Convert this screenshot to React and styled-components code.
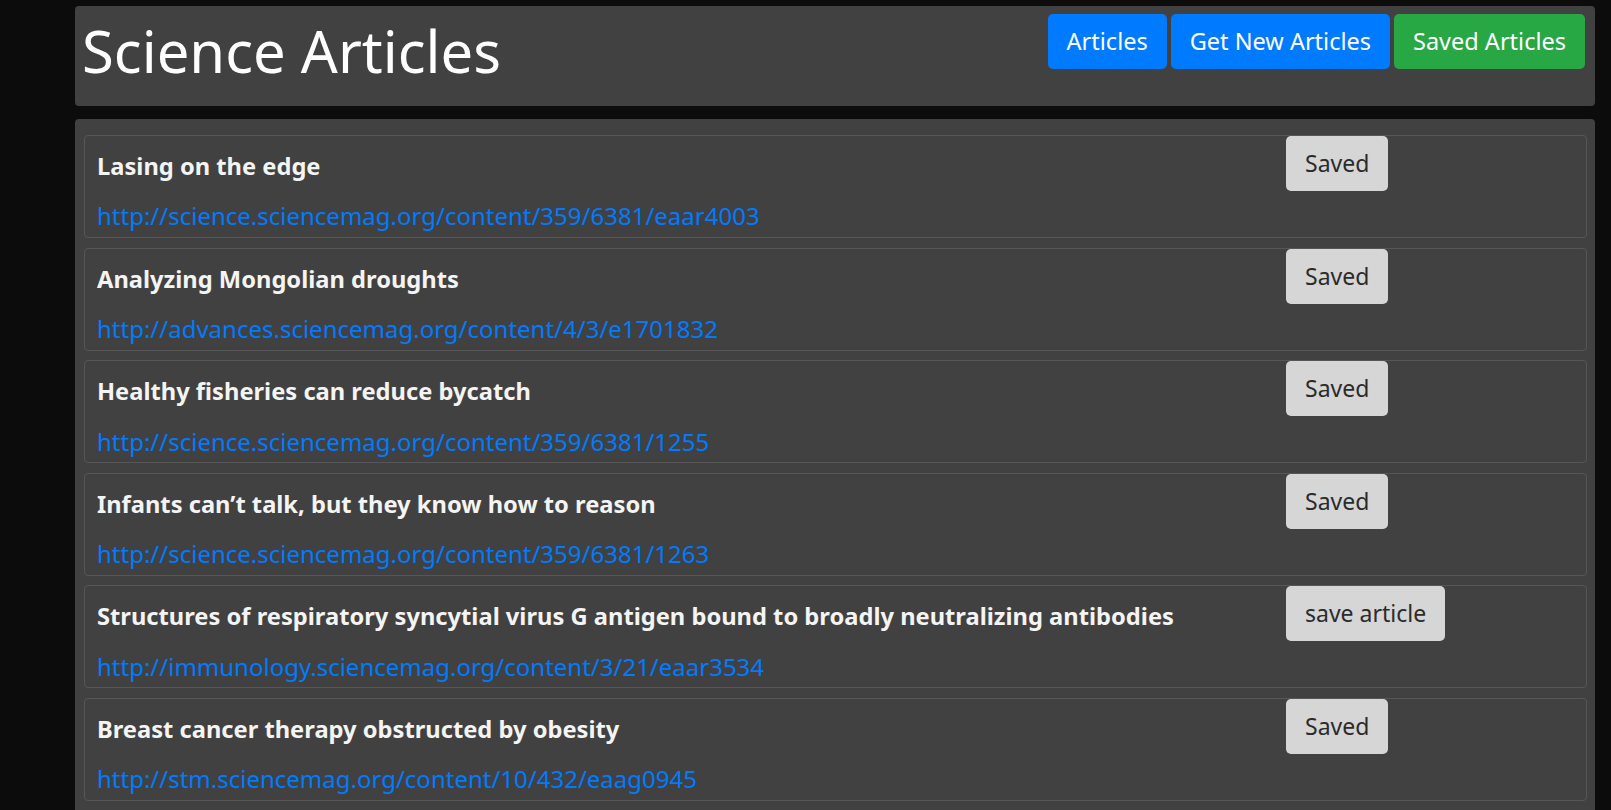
import React from 'react'
import styled, { createGlobalStyle } from 'styled-components'

const GlobalStyle = createGlobalStyle`
  html, body {
    margin: 0;
    padding: 0;
    background: #0c0c0c;
    font-family: "Noto Sans", "DejaVu Sans", sans-serif;
  }
  * {
    box-sizing: border-box;
  }
`;

const Page = styled.div`
  padding: 6px 16px 0 75px;
  min-height: 810px;
  overflow: hidden;
`;

const Header = styled.header`
  background: #414141;
  border-radius: 4px;
  height: 100px;
  display: flex;
  justify-content: space-between;
  align-items: flex-start;
  padding: 8px 10px 0 7px;
`;

const Title = styled.h1`
  margin: 2px 0 0 0;
  font-size: 58px;
  font-weight: 400;
  line-height: 1.2;
  color: #ffffff;
`;

const Nav = styled.nav`
  display: flex;
  gap: 4px;
`;

const Button = styled.button`
  height: 55px;
  padding: 0 19px;
  border: none;
  border-radius: 5px;
  font-family: inherit;
  font-size: ${({ variant }) => (variant === 'light' ? '23px' : '23.5px')};
  line-height: 1;
  cursor: pointer;
  color: ${({ variant }) => (variant === 'light' ? '#2b2b2b' : '#ffffff')};
  background: ${({ variant }) =>
    variant === 'green' ? '#28a745' : variant === 'light' ? '#d6d6d6' : '#007bff'};
`;

const Main = styled.main`
  margin-top: 13px;
  background: #414141;
  border-radius: 4px 4px 0 0;
  padding: 16px 8px 20px 9px;
  display: flex;
  flex-direction: column;
  gap: 9.6px;
`;

const Card = styled.article`
  border: 1px solid #565656;
  border-radius: 4px;
  height: 103px;
  display: grid;
  grid-template-columns: 1fr 300px;
`;

const Body = styled.div`
  padding: 16px 12px 0 12px;
  display: flex;
  flex-direction: column;
  gap: 18px;
`;

const ArticleTitle = styled.h4`
  margin: 0;
  font-size: 23.7px;
  font-weight: 700;
  line-height: 1.2;
  color: #f4f4f4;
`;

const ArticleLink = styled.a`
  font-size: 24px;
  line-height: 36px;
  color: #007bff;
  text-decoration: none;
`;

const Side = styled.div`
  display: flex;
  align-items: flex-start;
`;

const articles = [
  { title: 'Lasing on the edge', url: 'http://science.sciencemag.org/content/359/6381/eaar4003', saved: true },
  { title: 'Analyzing Mongolian droughts', url: 'http://advances.sciencemag.org/content/4/3/e1701832', saved: true },
  { title: 'Healthy fisheries can reduce bycatch', url: 'http://science.sciencemag.org/content/359/6381/1255', saved: true },
  { title: 'Infants can\u2019t talk, but they know how to reason', url: 'http://science.sciencemag.org/content/359/6381/1263', saved: true },
  { title: 'Structures of respiratory syncytial virus G antigen bound to broadly neutralizing antibodies', url: 'http://immunology.sciencemag.org/content/3/21/eaar3534', saved: false },
  { title: 'Breast cancer therapy obstructed by obesity', url: 'http://stm.sciencemag.org/content/10/432/eaag0945', saved: true },
];

const App = () => {
  return <>
    <GlobalStyle />
    <Page>
      <Header>
        <Title>Science Articles</Title>
        <Nav>
          <Button>Articles</Button>
          <Button>Get New Articles</Button>
          <Button variant="green">Saved Articles</Button>
        </Nav>
      </Header>
      <Main>
        {articles.map((item, index) => (
          <Card key={index}>
            <Body>
              <ArticleTitle>{item.title}</ArticleTitle>
              <ArticleLink href={item.url}>{item.url}</ArticleLink>
            </Body>
            <Side>
              <Button variant="light">{item.saved ? 'Saved' : 'save article'}</Button>
            </Side>
          </Card>
        ))}
      </Main>
    </Page>
  </>
}

export default App
